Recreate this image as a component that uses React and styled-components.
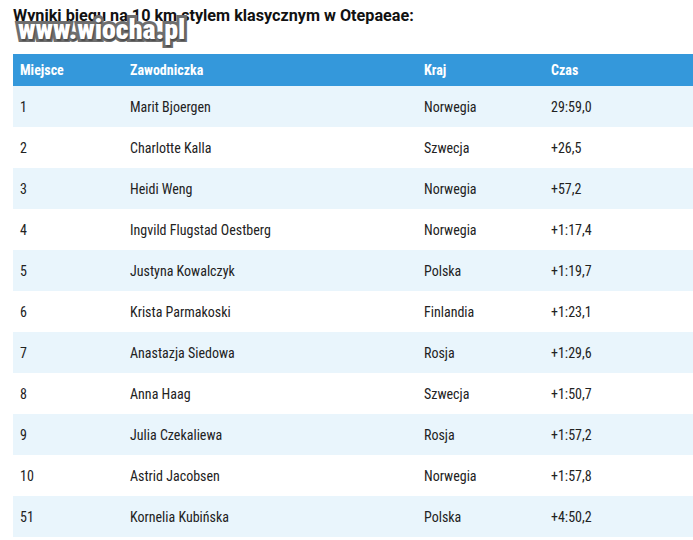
import React from 'react';
import styled, { createGlobalStyle } from 'styled-components';

const GlobalStyle = createGlobalStyle`
  html, body {
    margin: 0;
    padding: 0;
    background: #fff;
  }
`;

const Page = styled.div`
  position: relative;
  width: 693px;
  height: 540px;
  overflow: hidden;
  padding: 0 0 0 13px;
  box-sizing: border-box;
`;

const Title = styled.h2`
  margin: 0;
  padding-top: 6px;
  height: 54px;
  box-sizing: border-box;
  font-family: Roboto, 'Liberation Sans', sans-serif;
  font-weight: 700;
  font-size: 16.2px;
  color: #111;
`;

const Watermark = styled.div`
  position: absolute;
  left: 18px;
  top: 14px;
  font-family: 'Roboto Condensed', 'Liberation Sans Narrow', Roboto, sans-serif;
  font-stretch: condensed;
  font-weight: 900;
  font-size: 28px;
  line-height: 32px;
  color: #fff;
  -webkit-text-stroke: 6px #6e6e6e;
  paint-order: stroke fill;
  text-shadow: 1px 2px 1px rgba(0, 0, 0, 0.3);
`;

const Table = styled.div`
  width: 690px;
  font-family: 'Roboto Condensed', 'Liberation Sans Narrow', 'Arial Narrow', Roboto, sans-serif;
  font-stretch: condensed;
`;

const Row = styled.div`
  display: grid;
  grid-template-columns: 110px 294px 127px 1fr;
  align-items: center;
  height: ${p => (p.$head ? '32px' : '41px')};
  background: ${p => (p.$head ? '#3498db' : p.$alt ? '#e9f5fc' : '#fff')};
  color: ${p => (p.$head ? '#fff' : '#222')};
  font-weight: ${p => (p.$head ? 700 : 400)};
  font-size: 14px;
`;

const Cell = styled.div`
  padding-left: 7px;
  white-space: nowrap;
`;

const rows = [
  ['1', 'Marit Bjoergen', 'Norwegia', '29:59,0'],
  ['2', 'Charlotte Kalla', 'Szwecja', '+26,5'],
  ['3', 'Heidi Weng', 'Norwegia', '+57,2'],
  ['4', 'Ingvild Flugstad Oestberg', 'Norwegia', '+1:17,4'],
  ['5', 'Justyna Kowalczyk', 'Polska', '+1:19,7'],
  ['6', 'Krista Parmakoski', 'Finlandia', '+1:23,1'],
  ['7', 'Anastazja Siedowa', 'Rosja', '+1:29,6'],
  ['8', 'Anna Haag', 'Szwecja', '+1:50,7'],
  ['9', 'Julia Czekaliewa', 'Rosja', '+1:57,2'],
  ['10', 'Astrid Jacobsen', 'Norwegia', '+1:57,8'],
  ['51', 'Kornelia Kubińska', 'Polska', '+4:50,2'],
];

export default function App() {
  return (
    <>
      <GlobalStyle />
      <Page>
        <Title>Wyniki biegu na 10 km stylem klasycznym w Otepaeae:</Title>
        <Watermark>www.wiocha.pl</Watermark>
        <Table>
          <Row $head>
            <Cell>Miejsce</Cell>
            <Cell>Zawodniczka</Cell>
            <Cell>Kraj</Cell>
            <Cell>Czas</Cell>
          </Row>
          {rows.map((r, i) => (
            <Row key={r[0]} $alt={i % 2 === 0}>
              {r.map((c, j) => (
                <Cell key={j}>{c}</Cell>
              ))}
            </Row>
          ))}
        </Table>
      </Page>
    </>
  );
}
